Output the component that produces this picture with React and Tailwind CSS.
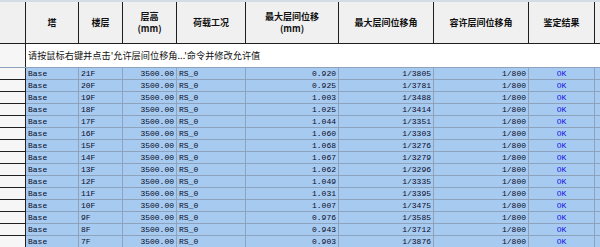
import React from "react";

const rows = [
  ["21F", "0.920", "1/3805"],
  ["20F", "0.925", "1/3781"],
  ["19F", "1.003", "1/3488"],
  ["18F", "1.025", "1/3414"],
  ["17F", "1.044", "1/3351"],
  ["16F", "1.060", "1/3303"],
  ["15F", "1.068", "1/3276"],
  ["14F", "1.067", "1/3279"],
  ["13F", "1.062", "1/3296"],
  ["12F", "1.049", "1/3335"],
  ["11F", "1.031", "1/3395"],
  ["10F", "1.007", "1/3475"],
  ["9F", "0.976", "1/3585"],
  ["8F", "0.943", "1/3712"],
  ["7F", "0.903", "1/3876"],
];

const cjk = "font-['SimSun','Noto_Sans_CJK_SC',sans-serif]";
const mono = "font-['Liberation_Mono','Noto_Sans_CJK_SC',monospace]";

function H({ w, children }) {
  return (
    <div
      className={`${w} shrink-0 h-full border-r border-[#1e1e1e] flex flex-col items-center justify-center text-[9px] leading-[12px] font-bold text-[#111] ${cjk}`}
    >
      {children}
    </div>
  );
}

function Row({ floor, disp, ang }) {
  const cell = "shrink-0 h-full border-r border-b border-[#8ea2bb] flex items-center px-[2px]";
  return (
    <div className={`flex h-[12px] bg-[#a6caf0] text-[8px] text-[#0c0c28] ${mono}`}>
      <div className="w-[26px] shrink-0 h-full bg-[#f6f6f6] border-r border-b border-[#202020]" />
      <div className={`${cell} w-[53px]`}>Base</div>
      <div className={`${cell} w-[44px]`}>{floor}</div>
      <div className={`${cell} w-[54px] justify-end`}>3500.00</div>
      <div className={`${cell} w-[69px]`}>RS_0</div>
      <div className={`${cell} w-[93px] justify-end`}>{disp}</div>
      <div className={`${cell} w-[95px] justify-end`}>{ang}</div>
      <div className={`${cell} w-[95px] justify-end`}>1/800</div>
      <div className={`${cell} w-[66px] justify-center text-[#1414e6]`}>OK</div>
      <div className="flex-1 h-full border-b border-[#8ea2bb]" />
    </div>
  );
}

export default function App() {
  return (
    <div className="w-[600px] h-[247px] overflow-hidden bg-white">
      <div className="h-[2px] bg-[#d4dbe4]" />
      <div className="flex h-[42px] bg-[#f0f0f0] border-b border-[#1e1e1e]">
        <H w="w-[26px]"></H>
        <H w="w-[53px]">塔</H>
        <H w="w-[44px]">楼层</H>
        <H w="w-[54px]">
          <span>层高</span>
          <span>(mm)</span>
        </H>
        <H w="w-[69px]">荷载工况</H>
        <H w="w-[93px]">
          <span>最大层间位移</span>
          <span>(mm)</span>
        </H>
        <H w="w-[95px]">最大层间位移角</H>
        <H w="w-[95px]">容许层间位移角</H>
        <H w="w-[66px]">鉴定结果</H>
        <div className="flex-1" />
      </div>
      <div className="flex h-[24px] bg-white border-b border-[#8ea2bb]">
        <div className="w-[26px] shrink-0 h-full bg-[#f6f6f6] border-r border-[#202020]" />
        <div className={`flex items-center pl-[2px] text-[9.2px] text-[#111] ${cjk}`}>
          请按鼠标右键并点击'允许层间位移角...'命令并修改允许值
        </div>
      </div>
      {rows.map((r) => (
        <Row key={r[0]} floor={r[0]} disp={r[1]} ang={r[2]} />
      ))}
    </div>
  );
}
